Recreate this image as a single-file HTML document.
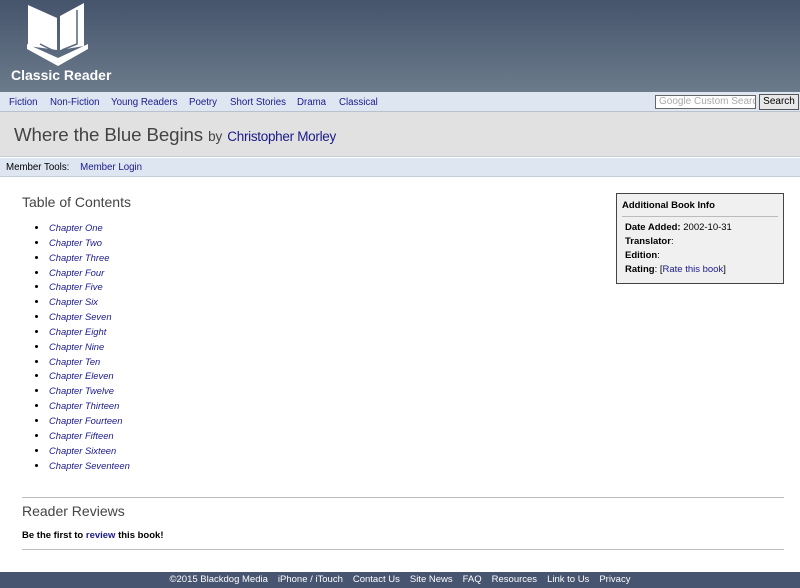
<!DOCTYPE html>
<html><head><style>
*{margin:0;padding:0;box-sizing:border-box}
body{width:800px;height:588px;font-family:"Liberation Sans",Arial,sans-serif;background:#fff;position:relative;overflow:hidden}
a{color:#1a1a8c;text-decoration:none}
#hdr{position:absolute;left:0;top:0;width:800px;height:92px;background:linear-gradient(#46546c,#6b7b8b)}
#logo{position:absolute;left:11px;top:67px;color:#fff;font-weight:bold;font-size:14px}
#nav{position:absolute;left:0;top:92px;width:800px;height:20px;background:#dde6f1;border-bottom:1px solid #b9c2cc;font-size:9.7px}
#nav a{position:absolute;top:5px}
#srch{position:absolute;left:655px;top:95px;width:101px;height:14px;border:1px solid #666;background:#fff;font-size:10px;color:#aaa;padding-left:3px;line-height:12px;white-space:nowrap;overflow:hidden}
#btn{position:absolute;left:759px;top:94px;width:40px;height:16px;border:1px solid #555;background:#e8e8e8;font-size:10px;text-align:center;line-height:14px}
#title{position:absolute;left:0;top:112px;width:800px;height:45px;background:#e1e1e1;border-bottom:1px solid #c4ccd6}
#title h1{position:absolute;left:14px;top:12px;font-weight:normal;font-size:18.7px;color:#444;letter-spacing:-0.1px}
#title h1 small{font-size:13.5px}
#title h1 a{font-size:13.5px;color:#1a1a8c;letter-spacing:-0.3px}
#mt{position:absolute;left:0;top:158px;width:800px;height:19px;background:#dde6f1;border-bottom:1px solid #c4ccd6;font-size:9.7px;padding:4px 6px}
h2{font-weight:normal;font-size:14px;color:#444;position:absolute;left:22px}
ul{position:absolute;left:34px;top:222px;font-size:9.4px;list-style:none}
li{height:14.85px;font-style:italic;position:relative;padding-left:15px}
li:before{content:"";position:absolute;left:1px;top:4px;width:3px;height:3px;border-radius:50%;background:#000}
#info{position:absolute;left:616px;top:193px;width:168px;height:91px;border:1px solid #444;background:#f0f0f0;font-size:9.5px;padding:6px 5px}
#info .h{font-weight:bold;border-bottom:1px solid #bbb;padding-bottom:5px;margin-bottom:5px}
#info p{margin-left:3px;height:14px}
hr{position:absolute;left:22px;width:762px;border:0;border-top:1px solid #bbb}
#ft{position:absolute;left:0;top:572px;width:800px;height:16px;background:#475570;color:#fff;font-size:9.5px;text-align:center;line-height:16px}
#ft span{margin:0 5px}
</style></head><body>
<div id="hdr">
<svg style="position:absolute;left:0;top:0" width="100" height="66" viewBox="0 0 100 66">
<polygon points="28,5 57,18 57,50 28,46" fill="#fff"/>
<polygon points="60,16 84,3 84,46 60,50" fill="#fff"/>
<polygon points="27,46 58,63 88,46 88,49 58,66 27,49" fill="#fff"/>
<polygon points="27,44 58,58 88,44 88,48 58,63 27,48" fill="#fff"/>
<path d="M77,10 L77,44 L62,50" stroke="#56667d" stroke-width="1.5" fill="none"/>
<path d="M40,44 L56,52" stroke="#56667d" stroke-width="1.5"/>
</svg>
<div id="logo">Classic Reader</div>
</div>
<div id="nav">
<a style="left:9px">Fiction</a><a style="left:50px">Non-Fiction</a><a style="left:111px">Young Readers</a><a style="left:189px">Poetry</a><a style="left:230px">Short Stories</a><a style="left:297px">Drama</a><a style="left:339px">Classical</a>
</div>
<div id="srch">Google Custom Search</div>
<div id="btn">Search</div>
<div id="title"><h1>Where the Blue Begins <small>by</small> <a>Christopher Morley</a></h1></div>
<div id="mt">Member Tools: &nbsp;&nbsp;&nbsp;<a>Member Login</a></div>
<h2 style="top:194px">Table of Contents</h2>
<ul>
<li><a>Chapter One</a></li><li><a>Chapter Two</a></li><li><a>Chapter Three</a></li><li><a>Chapter Four</a></li><li><a>Chapter Five</a></li><li><a>Chapter Six</a></li><li><a>Chapter Seven</a></li><li><a>Chapter Eight</a></li><li><a>Chapter Nine</a></li><li><a>Chapter Ten</a></li><li><a>Chapter Eleven</a></li><li><a>Chapter Twelve</a></li><li><a>Chapter Thirteen</a></li><li><a>Chapter Fourteen</a></li><li><a>Chapter Fifteen</a></li><li><a>Chapter Sixteen</a></li><li><a>Chapter Seventeen</a></li>
</ul>
<div id="info">
<div class="h">Additional Book Info</div>
<p><b>Date Added:</b> 2002-10-31</p>
<p><b>Translator</b>:</p>
<p><b>Edition</b>:</p>
<p><b>Rating</b>: [<a>Rate this book</a>]</p>
</div>
<hr style="top:497px">
<h2 style="top:503px">Reader Reviews</h2>
<div style="position:absolute;left:22px;top:530px;font-size:9.5px;font-weight:bold">Be the first to <a>review</a> this book!</div>
<hr style="top:549px">
<div id="ft"><span>©2015 Blackdog Media</span><span>iPhone / iTouch</span><span>Contact Us</span><span>Site News</span><span>FAQ</span><span>Resources</span><span>Link to Us</span><span>Privacy</span></div>
</body></html>
